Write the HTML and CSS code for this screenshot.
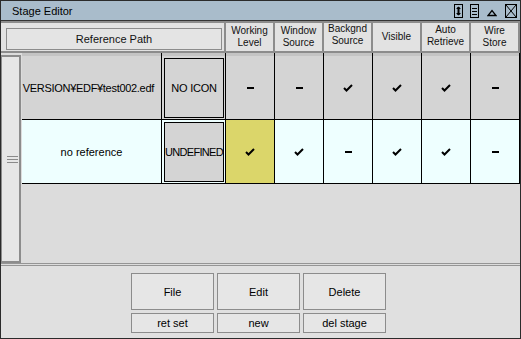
FILE: index.html
```html
<!DOCTYPE html>
<html>
<head>
<meta charset="utf-8">
<link rel="stylesheet" href="styles.css">
</head>
<body>
<div class="window">
  <div class="titlebar">
    <span class="title">Stage Editor</span>
    <div class="tb-icons">
      <svg class="ic ic-size" width="9" height="14" viewBox="0 0 9 14"><rect x="0.5" y="0.5" width="8" height="13" fill="none" stroke="#000"/><path d="M4.5 3v8" stroke="#000" stroke-width="2"/><path d="M2 5L4.5 2.5L7 5ZM2 9L4.5 11.5L7 9Z" fill="#000"/></svg>
      <svg class="ic ic-menu" width="9" height="14" viewBox="0 0 9 14"><rect x="0.5" y="0.5" width="8" height="13" fill="none" stroke="#000"/><path d="M2 4.5h5M2 7.5h5M2 10.5h5" stroke="#000"/></svg>
      <svg class="ic ic-tri" width="10" height="14" viewBox="0 0 10 14"><path d="M1 11.5h8L5 6.5Z" fill="none" stroke="#000" stroke-width="1.3"/></svg>
      <svg class="ic ic-close" width="12" height="14" viewBox="0 0 12 14"><rect x="0.5" y="0.5" width="11" height="13" fill="none" stroke="#000"/><path d="M1 1L11 13M11 1L1 13" stroke="#000"/></svg>
    </div>
  </div>

  <div class="header">
    <div class="hcell ref"><div class="refbtn">Reference Path</div></div>
    <div class="hcell">Working<br>Level</div>
    <div class="hcell">Window<br>Source</div>
    <div class="hcell hc-up">Backgnd<br>Source</div>
    <div class="hcell">Visible</div>
    <div class="hcell hc-up1">Auto<br>Retrieve</div>
    <div class="hcell">Wire<br>Store</div>
  </div>

  <div class="body">
    <div class="strip"><span class="grip"></span></div>
    <div class="table">
      <div class="row spacer">
        <div class="cell"></div><div class="cell"></div><div class="cell"></div><div class="cell"></div><div class="cell"></div><div class="cell"></div><div class="cell"></div><div class="cell"></div>
      </div>
      <div class="row r1">
        <div class="cell path"><span>VERSION¥EDF¥test002.edf</span></div>
        <div class="cell icon"><div class="iconbox">NO ICON</div></div>
        <div class="cell"><i class="dash"></i></div>
        <div class="cell"><i class="dash"></i></div>
        <div class="cell"><svg class="chk" width="10" height="8" viewBox="0 0 10 8"><path d="M1 4L3.5 6.5L9 1" fill="none" stroke="#000" stroke-width="2"/></svg></div>
        <div class="cell"><svg class="chk" width="10" height="8" viewBox="0 0 10 8"><path d="M1 4L3.5 6.5L9 1" fill="none" stroke="#000" stroke-width="2"/></svg></div>
        <div class="cell"><svg class="chk" width="10" height="8" viewBox="0 0 10 8"><path d="M1 4L3.5 6.5L9 1" fill="none" stroke="#000" stroke-width="2"/></svg></div>
        <div class="cell"><i class="dash"></i></div>
      </div>
      <div class="row r2">
        <div class="cell path center"><span>no reference</span></div>
        <div class="cell icon"><div class="iconbox tight">UNDEFINED</div></div>
        <div class="cell sel"><svg class="chk" width="10" height="8" viewBox="0 0 10 8"><path d="M1 4L3.5 6.5L9 1" fill="none" stroke="#000" stroke-width="2"/></svg></div>
        <div class="cell"><svg class="chk" width="10" height="8" viewBox="0 0 10 8"><path d="M1 4L3.5 6.5L9 1" fill="none" stroke="#000" stroke-width="2"/></svg></div>
        <div class="cell"><i class="dash"></i></div>
        <div class="cell"><svg class="chk" width="10" height="8" viewBox="0 0 10 8"><path d="M1 4L3.5 6.5L9 1" fill="none" stroke="#000" stroke-width="2"/></svg></div>
        <div class="cell"><svg class="chk" width="10" height="8" viewBox="0 0 10 8"><path d="M1 4L3.5 6.5L9 1" fill="none" stroke="#000" stroke-width="2"/></svg></div>
        <div class="cell"><i class="dash"></i></div>
      </div>
    </div>
  </div>

  <div class="footer">
    <div class="btngrid">
      <div class="btn big">File</div>
      <div class="btn big">Edit</div>
      <div class="btn big">Delete</div>
      <div class="btn small">ret set</div>
      <div class="btn small">new</div>
      <div class="btn small">del stage</div>
    </div>
  </div>
</div>
</body>
</html>
```

FILE: styles.css
```css
* { box-sizing: border-box; }
html, body { margin: 0; padding: 0; }
body {
  font-family: "Liberation Sans", Arial, sans-serif;
  font-size: 11px;
  color: #000;
  background: #dcdcdc;
}
.window {
  width: 521px;
  height: 339px;
  border: 1px solid #2b2b2b;
  background: #dcdcdc;
  display: flex;
  flex-direction: column;
  overflow: hidden;
}
.titlebar {
  height: 20px;
  flex: none;
  background: #a9bccb;
  border-bottom: 1px solid #333;
  display: flex;
  align-items: flex-start;
  justify-content: space-between;
  padding-left: 11px;
  padding-right: 3px;
}
.title {
  font-size: 11px;
  line-height: 13px;
  margin-top: 4px;
}
.tb-icons {
  display: flex;
  align-items: flex-start;
  margin-top: 3px;
}
.ic { display: block; }
.ic-size { margin-right: 7px; }
.ic-menu { margin-right: 8px; }
.ic-tri { margin-right: 8px; }

.header {
  height: 32px;
  flex: none;
  border-top: 2px solid #8c8c8c;
  border-bottom: 2px solid #8c8c8c;
  background: #e2e2e2;
  display: grid;
  grid-template-columns: 225px repeat(6, 49px);
}
.hcell {
  border-right: 2px solid #8c8c8c;
  font-size: 10px;
  line-height: 12px;
  text-align: center;
  display: flex;
  align-items: center;
  justify-content: center;
  padding-bottom: 1px;
  color: #111;
}
.hc-up { padding-bottom: 4px; }
.hc-up1 { padding-bottom: 2px; }
.hcell.ref {
  padding: 5px 2px 1px 5px;
  align-items: stretch;
  justify-content: stretch;
}
.refbtn {
  flex: 1;
  border: 1px solid #8c8c8c;
  background: #e4e4e4;
  font-size: 11px;
  display: flex;
  align-items: center;
  justify-content: center;
}

.body {
  height: 213px;
  flex: none;
  display: flex;
  border-bottom: 3px double #959595;
  background: #dcdcdc;
}
.strip {
  width: 20px;
  flex: none;
  margin-top: 2px;
  background: #e6e6e6;
  border-left: 1px solid #8c8c8c;
  border-right: 2px solid #8c8c8c;
  border-top: 2px solid #8c8c8c;
  border-bottom: 2px solid #8c8c8c;
  position: relative;
  margin-right: 1px;
}
.grip {
  position: absolute;
  left: 5px;
  top: 99px;
  width: 11px;
  height: 7px;
  border-top: 1px solid #8a8a8a;
  border-bottom: 1px solid #8a8a8a;
}
.grip::after {
  content: "";
  position: absolute;
  left: 0;
  right: 0;
  top: 2px;
  border-top: 1px solid #8a8a8a;
}
.table {
  width: 498px;
  flex: none;
  display: flex;
  flex-direction: column;
}
.row {
  display: grid;
  grid-template-columns: 140px 64px repeat(6, 49px);
  height: 64px;
  border-bottom: 1px solid #000;
}
.row.spacer {
  height: 3px;
  border-bottom: none;
  background: #c4c4c4;
}
.r1 { background: #d4d4d4; }
.r2 { background: #eeffff; }
.cell {
  border-right: 1px solid #000;
  display: flex;
  align-items: center;
  justify-content: center;
  overflow: hidden;
  white-space: nowrap;
}
.cell.path {
  justify-content: flex-end;
  padding-right: 7px;
  letter-spacing: -0.3px;
}
.cell.path.center {
  justify-content: center;
  padding-right: 0;
  letter-spacing: 0;
}
.cell.icon {
  padding: 2px 1px 1px 2px;
  align-items: stretch;
  justify-content: stretch;
}
.iconbox {
  flex: 1;
  border: 1px solid #000;
  background: #d4d4d4;
  display: flex;
  align-items: center;
  justify-content: center;
  font-size: 11px;
  letter-spacing: -0.2px;
}
.iconbox.tight { letter-spacing: -0.7px; }
.cell.sel { background: #dbd66a; }
.dash {
  display: block;
  width: 7px;
  height: 2px;
  background: #000;
}
.chk { display: block; }

.footer {
  flex: 1;
  background: #e0e0e0;
  padding: 7px 0 0 130px;
}
.btngrid {
  display: grid;
  grid-template-columns: repeat(3, 83px);
  grid-template-rows: 37px 20px;
  column-gap: 3px;
  row-gap: 3px;
}
.btn {
  border: 1px solid #8c8c8c;
  background: #e6e6e6;
  display: flex;
  align-items: center;
  justify-content: center;
  font-size: 11px;
}
```
